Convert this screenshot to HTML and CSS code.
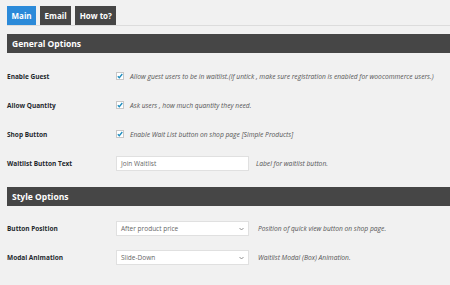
FILE: index.html
```html
<!DOCTYPE html>
<html>
<head>
<meta charset="utf-8">
<link rel="stylesheet" href="styles.css">
</head>
<body>
<div class="tabs">
  <span class="tab active">Main</span>
  <span class="tab">Email</span>
  <span class="tab">How to?</span>
</div>
<h3 class="section">General Options</h3>
<div class="rows">
  <div class="row">
    <div class="label">Enable Guest</div>
    <div class="field">
      <span class="check"><svg width="8" height="8" viewBox="0 0 8 8"><path d="M1.8 4.2 L3.3 5.7 L6.3 2" fill="none" stroke="#1e8cbe" stroke-width="1.3"/></svg></span>
      <span class="desc">Allow guest users to be in waitlist.(If untick , make sure registration is enabled for woocommerce users.)</span>
    </div>
  </div>
  <div class="row">
    <div class="label">Allow Quantity</div>
    <div class="field">
      <span class="check"><svg width="8" height="8" viewBox="0 0 8 8"><path d="M1.8 4.2 L3.3 5.7 L6.3 2" fill="none" stroke="#1e8cbe" stroke-width="1.3"/></svg></span>
      <span class="desc">Ask users , how much quantity they need.</span>
    </div>
  </div>
  <div class="row">
    <div class="label">Shop Button</div>
    <div class="field">
      <span class="check"><svg width="8" height="8" viewBox="0 0 8 8"><path d="M1.8 4.2 L3.3 5.7 L6.3 2" fill="none" stroke="#1e8cbe" stroke-width="1.3"/></svg></span>
      <span class="desc">Enable Wait List button on shop page [Simple Products]</span>
    </div>
  </div>
  <div class="row">
    <div class="label">Waitlist Button Text</div>
    <div class="field">
      <span class="input">Join Waitlist</span>
      <span class="desc wide">Label for waitlist button.</span>
    </div>
  </div>
</div>
<h3 class="section">Style Options</h3>
<div class="rows">
  <div class="row">
    <div class="label">Button Position</div>
    <div class="field">
      <span class="input select">After product price<svg class="chev" width="5" height="4" viewBox="0 0 5 4"><path d="M0.5 1 L2.5 3 L4.5 1" fill="none" stroke="#777" stroke-width="0.8"/></svg></span>
      <span class="desc wide2">Position of quick view button on shop page.</span>
    </div>
  </div>
  <div class="row">
    <div class="label">Modal Animation</div>
    <div class="field">
      <span class="input select">Slide-Down<svg class="chev" width="5" height="4" viewBox="0 0 5 4"><path d="M0.5 1 L2.5 3 L4.5 1" fill="none" stroke="#777" stroke-width="0.8"/></svg></span>
      <span class="desc wide2">Waitlist Modal (Box) Animation.</span>
    </div>
  </div>
</div>
</body>
</html>
```
FILE: styles.css
```css
html, body {
  margin: 0;
  background: #f1f1f1;
}
body {
  padding: 6px 0 0 7px;
  font-family: "Open Sans", "Liberation Sans", sans-serif;
  color: #23282d;
  overflow: hidden;
}
.tabs {
  display: flex;
  gap: 4px;
  border-bottom: 1px solid #dcdcdc;
}
.tab {
  height: 19px;
  line-height: 19px;
  padding: 0 4.5px;
  background: #464646;
  color: #fff;
  font-weight: 700;
  font-size: 8px;
}
.tab.active {
  background: #2b8ad9;
}
.section {
  margin: 8px 0 0 0;
  height: 19px;
  line-height: 19px;
  background: #464646;
  color: #fff;
  font-size: 8.5px;
  font-weight: 700;
  padding-left: 5px;
}
.rows + .section {
  margin-top: 0;
}
.rows {
  padding: 8.5px 0 9px;
}
.row {
  display: flex;
  align-items: center;
  height: 29px;
}
.label {
  width: 109px;
  flex: none;
  font-size: 6.5px;
  font-weight: 700;
  color: #23282d;
}
.field {
  display: flex;
  align-items: center;
}
.check {
  width: 8px;
  height: 8px;
  box-sizing: border-box;
  border: 1px solid #c7c7c7;
  background: #fff;
  display: flex;
  align-items: center;
  justify-content: center;
  margin-right: 6px;
}
.check svg {
  flex: none;
}
.desc {
  font-style: italic;
  font-size: 6.7px;
  color: #555;
  white-space: nowrap;
}
.input {
  width: 133px;
  height: 15px;
  box-sizing: border-box;
  background: #fff;
  border: 1px solid #e0e0e0;
  font-size: 6.5px;
  line-height: 13px;
  padding: 0 4px;
  color: #666;
  display: flex;
  align-items: center;
  justify-content: space-between;
}
.wide {
  margin-left: 7px;
}
.wide2 {
  margin-left: 9px;
}
.chev {
  flex: none;
}
```
